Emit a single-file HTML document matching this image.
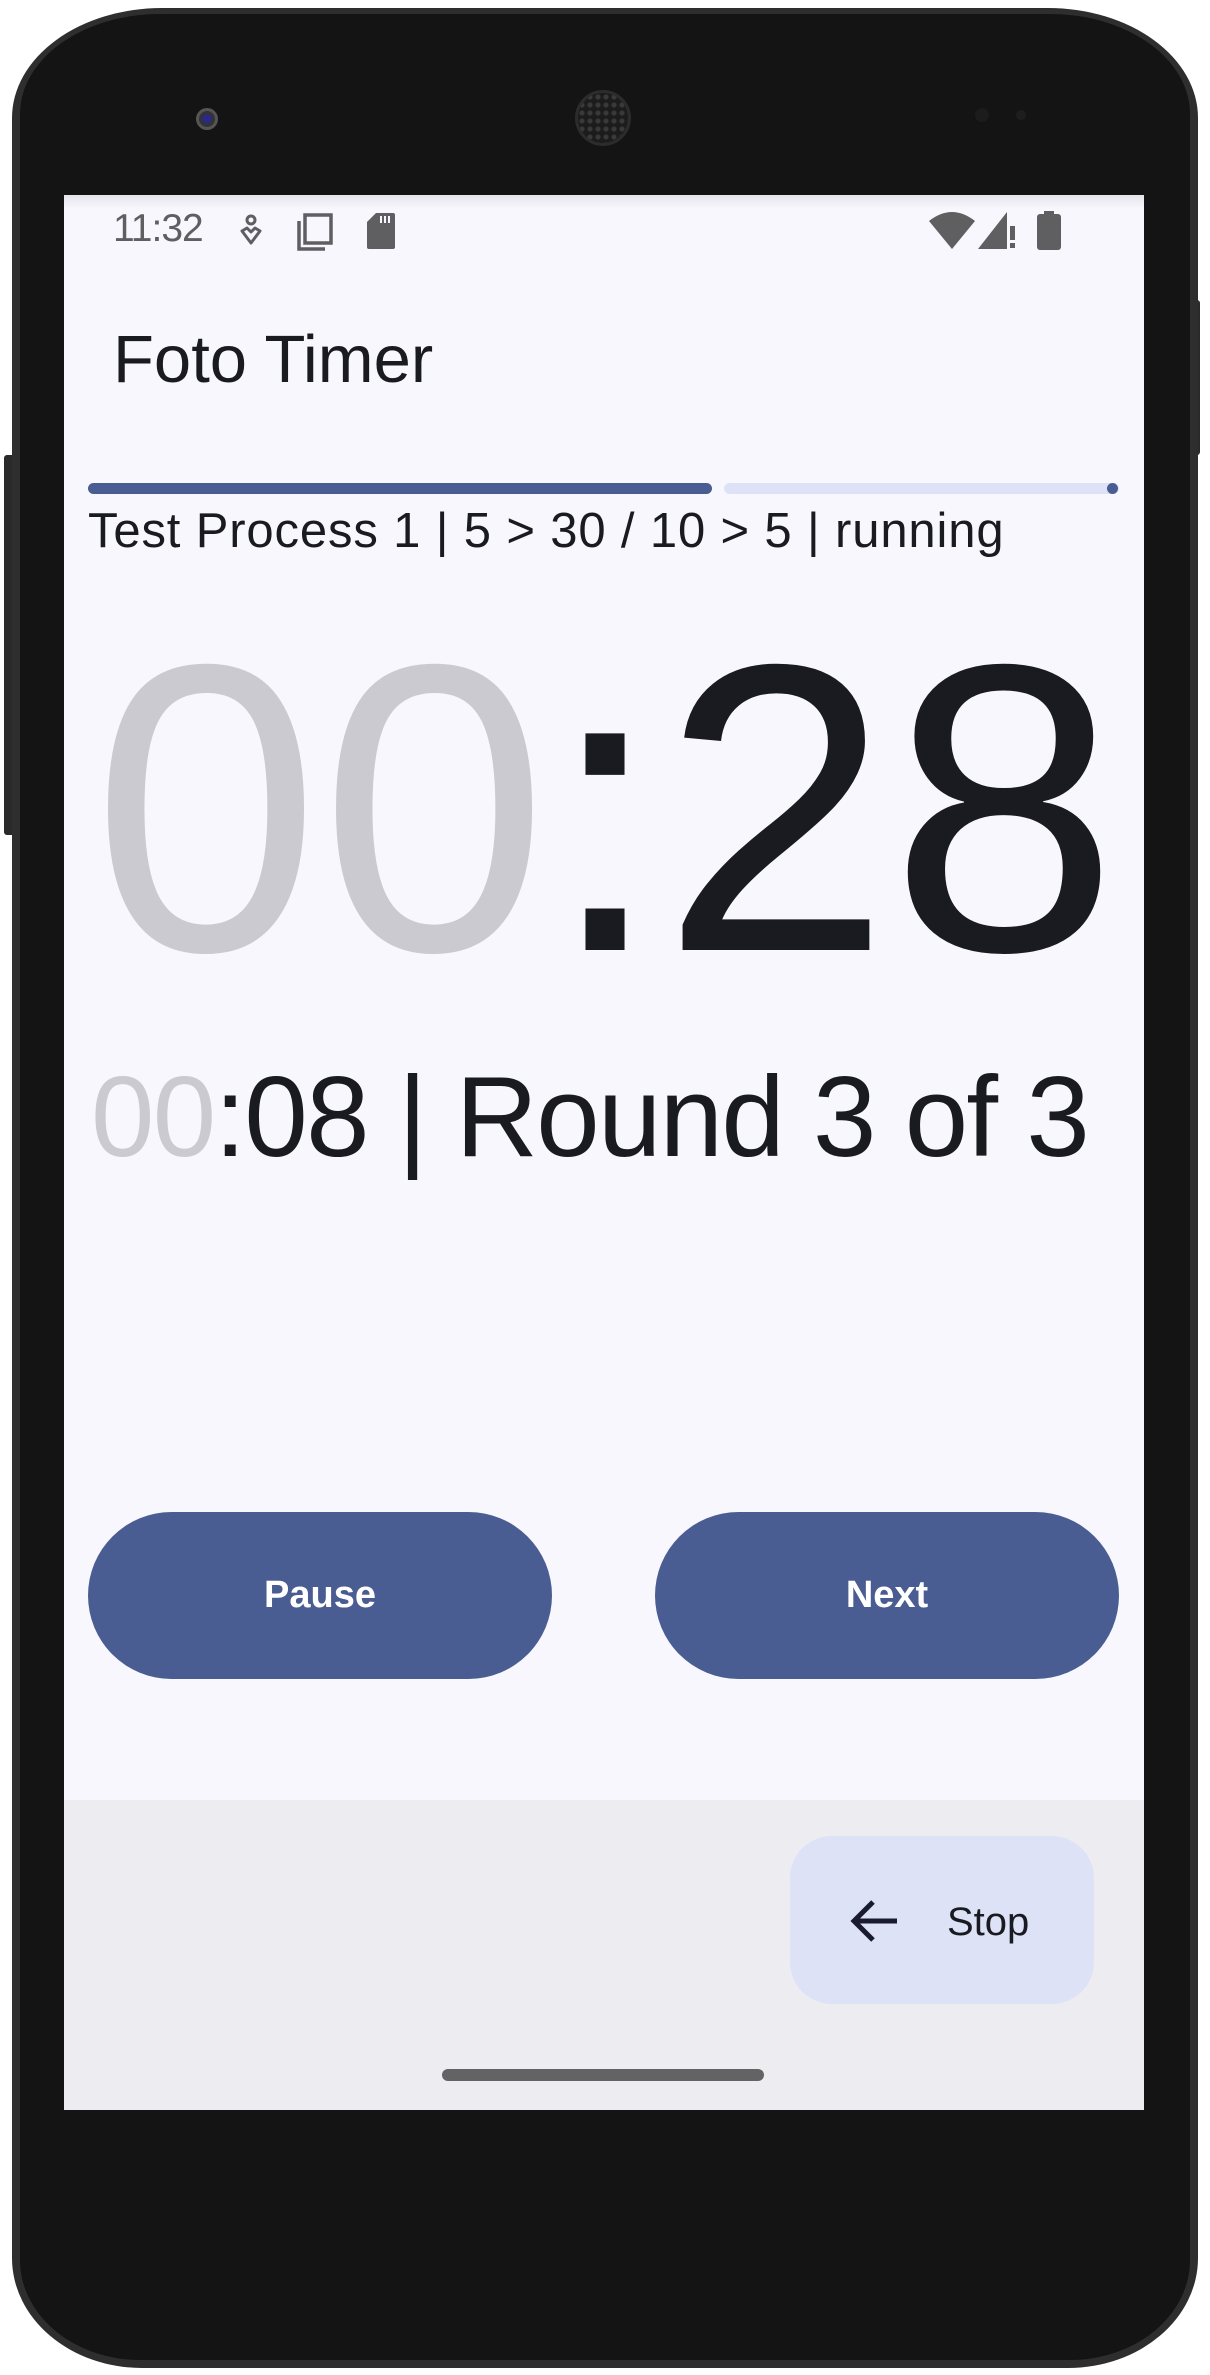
<!DOCTYPE html>
<html><head><meta charset="utf-8"><style>
*{margin:0;padding:0;box-sizing:border-box}
body{width:1210px;height:2375px;background:#fff;position:relative;overflow:hidden;font-family:"Liberation Sans",Arial,sans-serif}
.abs{position:absolute}
#phone{left:12px;top:8px;width:1186px;height:2360px;background:#2e2e2e;border-radius:150px 150px 130px 130px/110px 110px 110px 110px}
#phone2{left:20px;top:14px;width:1170px;height:2346px;background:#141414;border-radius:140px 140px 120px 120px/100px 100px 100px 100px}
#screen{left:64px;top:195px;width:1080px;height:1915px;background:#f8f7fd;overflow:hidden}
.t{position:absolute;white-space:nowrap;line-height:1}
</style></head><body>
<div class="abs" style="left:1192px;top:300px;width:8px;height:155px;background:#2a2a2a;border-radius:0 3px 3px 0"></div>
<div class="abs" style="left:4px;top:455px;width:8px;height:380px;background:#2a2a2a;border-radius:3px 0 0 3px"></div>
<div id="phone" class="abs"></div>
<div id="phone2" class="abs"></div>
<div class="abs" style="left:196px;top:108px;width:22px;height:22px;border-radius:50%;background:#333;border:3px solid #555"></div>
<div class="abs" style="left:202px;top:114px;width:10px;height:10px;border-radius:50%;background:#2a2a80"></div>
<div class="abs" style="left:575px;top:90px;width:56px;height:56px;border-radius:50%;background:radial-gradient(#3a3a3a 0 2px,#1c1c1c 3px) 0 0/8px 8px;border:3px solid #2c2c2c"></div>
<div class="abs" style="left:975px;top:108px;width:14px;height:14px;border-radius:50%;background:#1c1c1c"></div>
<div class="abs" style="left:1016px;top:110px;width:10px;height:10px;border-radius:50%;background:#1e1e1e"></div>

<div id="screen" class="abs">
  <div class="abs" style="left:0;top:0;width:1080px;height:14px;background:linear-gradient(#e6e5eb,#f8f7fd)"></div>
  <div class="t" style="left:49px;top:14px;font-size:39px;letter-spacing:-1px;color:#5f5f62">11:32</div>
  <svg class="abs" style="left:172px;top:18px" width="30" height="36" viewBox="0 0 30 36"><circle cx="15" cy="7" r="4" fill="none" stroke="#5f5f62" stroke-width="3"/><path d="M6 18 L15 30 L24 18 L19 15 L15 19 L11 15 Z" fill="none" stroke="#5f5f62" stroke-width="3" stroke-linejoin="round"/></svg>
  <svg class="abs" style="left:232px;top:17px" width="38" height="40" viewBox="0 0 38 40"><rect x="9" y="3" width="26" height="28" fill="none" stroke="#5f5f62" stroke-width="3.5"/><path d="M3 9 V37 H29" fill="none" stroke="#5f5f62" stroke-width="3.5"/></svg>
  <svg class="abs" style="left:302px;top:17px" width="30" height="38" viewBox="0 0 30 38"><path d="M10 1 H27 a2 2 0 0 1 2 2 V35 a2 2 0 0 1 -2 2 H3 a2 2 0 0 1 -2 -2 V10 Z" fill="#5f5f62"/><rect x="14" y="4" width="2" height="7" fill="#f8f7fd"/><rect x="18" y="4" width="2" height="7" fill="#f8f7fd"/><rect x="22" y="4" width="2" height="7" fill="#f8f7fd"/></svg>
  <svg class="abs" style="left:865px;top:16px" width="46" height="38" viewBox="0 0 46 38"><path d="M0 10 Q23 -8 46 10 L23 38 Z" fill="#5f5f62"/></svg>
  <svg class="abs" style="left:914px;top:17px" width="40" height="37" viewBox="0 0 40 37"><path d="M0 37 L29 0 V37 Z" fill="#5f5f62"/><rect x="32" y="14" width="5" height="14" fill="#5f5f62"/><rect x="32" y="31" width="5" height="5" fill="#5f5f62"/></svg>
  <svg class="abs" style="left:973px;top:16px" width="24" height="39" viewBox="0 0 24 39"><rect x="7" y="0" width="10" height="5" fill="#5f5f62"/><rect x="0" y="3" width="24" height="36" rx="3" fill="#5f5f62"/></svg>

  <div class="t" style="left:49px;top:131px;font-size:67px;color:#1a1b20">Foto Timer</div>

  <div class="abs" style="left:24px;top:288px;width:624px;height:11px;border-radius:6px;background:#4a5d92"></div>
  <div class="abs" style="left:660px;top:288px;width:395px;height:11px;border-radius:6px;background:#dde2f6"></div>
  <div class="abs" style="left:1043px;top:288px;width:11px;height:11px;border-radius:50%;background:#4a5d92"></div>

  <div class="t" style="left:24px;top:312px;font-size:49px;letter-spacing:0.85px;color:#1a1b20">Test Process 1 | 5 &gt; 30 / 10 &gt; 5 | running</div>

  <div class="t" style="left:28px;top:408px;font-size:410px;letter-spacing:0px;color:#1a1b20"><span style="color:#cbcad1">00</span>:28</div>

  <div class="t" style="left:27px;top:866px;font-size:114px;letter-spacing:-1.7px;color:#1a1b20"><span style="color:#cbcad1">00</span>:08 | Round 3 of 3</div>

  <div class="abs" style="left:24px;top:1317px;width:464px;height:167px;border-radius:84px;background:#4a5d92;color:#fff;font-size:38px;font-weight:bold;display:flex;align-items:center;justify-content:center">Pause</div>
  <div class="abs" style="left:591px;top:1317px;width:464px;height:167px;border-radius:84px;background:#4a5d92;color:#fff;font-size:38px;font-weight:bold;display:flex;align-items:center;justify-content:center">Next</div>

  <div class="abs" style="left:0;top:1605px;width:1080px;height:310px;background:#edecf1"></div>
  <div class="abs" style="left:726px;top:1641px;width:304px;height:168px;border-radius:42px;background:#dde2f6"></div>
  <svg class="abs" style="left:785px;top:1703px" width="50" height="46" viewBox="0 0 50 46"><path d="M48 23 H6 M24 4 L5 23 L24 42" fill="none" stroke="#1a1b2e" stroke-width="5"/></svg>
  <div class="t" style="left:883px;top:1707px;font-size:40px;color:#1a1b20">Stop</div>

  <div class="abs" style="left:378px;top:1874px;width:322px;height:12px;border-radius:6px;background:#636366"></div>
</div>
</body></html>
